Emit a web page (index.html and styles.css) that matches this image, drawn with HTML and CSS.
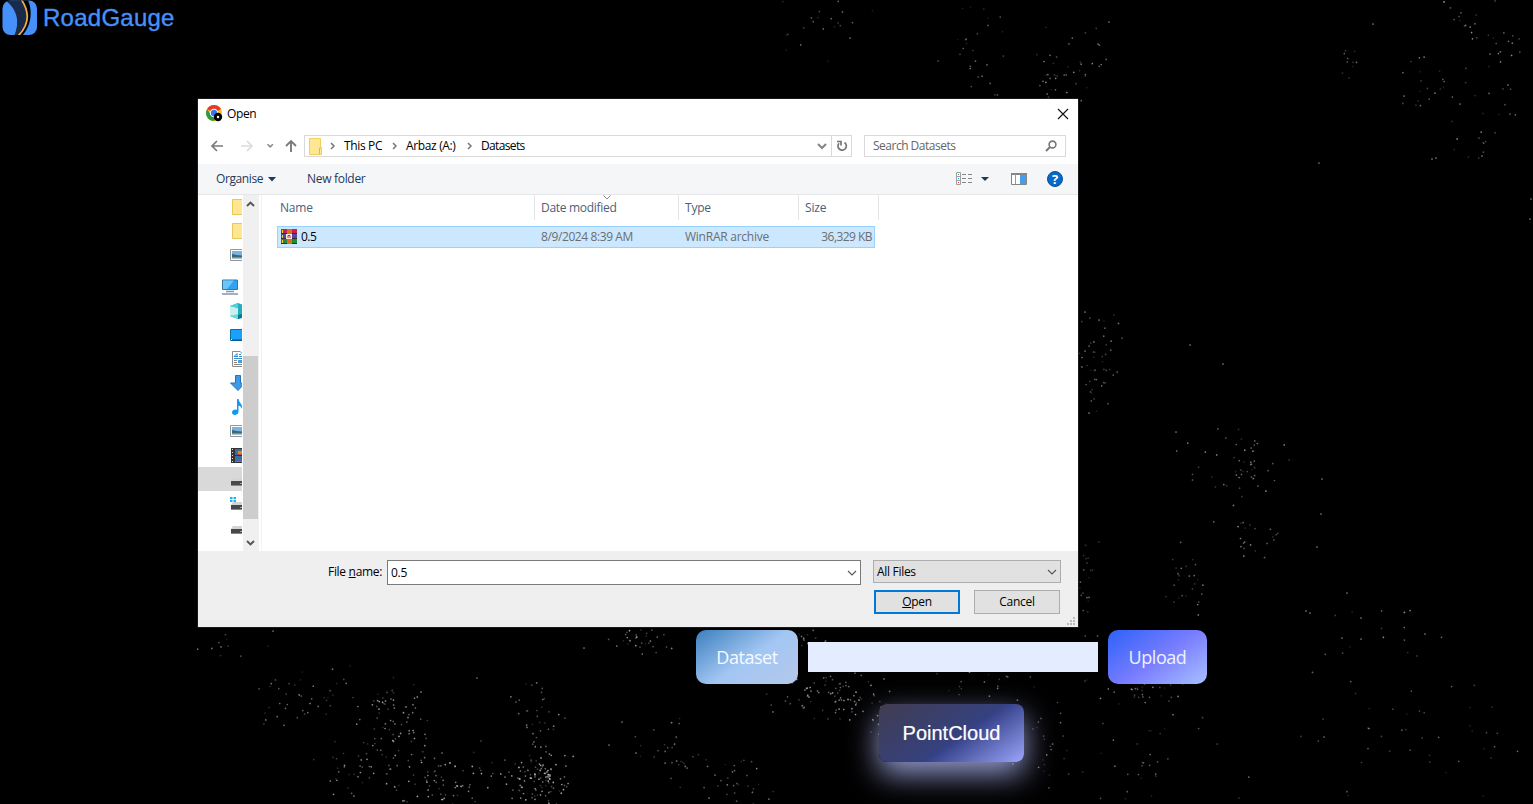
FILE: index.html
```html
<!DOCTYPE html>
<html lang="en">
<head>
<meta charset="utf-8">
<title>RoadGauge</title>
<link rel="stylesheet" href="styles.css">
</head>
<body>
<svg class="stars" id="stars" width="1533" height="804" aria-hidden="true"></svg>
<div class="page">
  <header class="brand">
    <svg width="36" height="36" viewBox="0 0 36 36">
      <defs><clipPath id="badge"><rect x="0.5" y="0.5" width="34.5" height="34.5" rx="8"/></clipPath></defs>
      <g clip-path="url(#badge)">
        <rect width="36" height="36" fill="#4690fa"/>
        <path d="M18 0H26C31 12 29 26 20 36H14Z" fill="#000"/>
        <path d="M3 0C14 8 19 21 12 36H17C29 24 27 8 19 0Z" fill="#1a2b49"/>
        <path d="M19 -1C28 12 27 25 16 36" fill="none" stroke="#f5ac42" stroke-width="1.7"/>
      </g>
    </svg>
    <span class="brand-name">RoadGauge</span>
  </header>
  <main class="controls">
    <div class="upload-row">
      <button class="btn btn-dataset">Dataset</button>
      <div class="path-field"></div>
      <button class="btn btn-upload">Upload</button>
    </div>
    <button class="btn btn-cloud">PointCloud</button>
  </main>
</div>

<section class="dialog">
  <div class="titlebar">
    <svg width="17" height="17" viewBox="0 0 17 17">
      <circle cx="8" cy="8" r="8" fill="#fbc116"/>
      <path d="M8 8L1.1 4A8 8 0 0 1 15 4Z" fill="#e33b2e"/>
      <path d="M1.1 4A8 8 0 0 0 8 16L11 10L5 10Z" fill="#2a9a48"/>
      <circle cx="8" cy="8" r="4.2" fill="#fff"/><circle cx="8" cy="8" r="3.2" fill="#3478e8"/>
      <circle cx="12" cy="12" r="4.2" fill="#000"/><circle cx="12" cy="12" r="1.2" fill="#fff"/>
    </svg>
    <span class="title">Open</span>
    <svg class="close" width="12" height="12" viewBox="0 0 12 12"><path d="M1 1L11 11M11 1L1 11" stroke="#111" stroke-width="1.1"/></svg>
  </div>
  <div class="navbar">
    <div class="arrows">
      <svg width="90" height="22" viewBox="0 0 90 22" fill="none">
        <path d="M13 11H2M7 6L2 11L7 16" stroke="#7a7a7a" stroke-width="1.7"/>
        <path d="M31 11H42M37 6L42 11L37 16" stroke="#dcdcdc" stroke-width="1.7"/>
        <path d="M57.500 9.200L60.200 11.900L62.900 9.200" stroke="#8a8a8a" stroke-width="1.6"/>
        <path d="M81 17V6M76 11L81 6L86 11" stroke="#7a7a7a" stroke-width="1.9"/>
      </svg>
    </div>
    <div class="address">
      <svg class="addr-icon" width="14" height="17" viewBox="0 0 14 17"><path d="M.5 .5H11.500V9.500H12.500V16.500H.5Z" fill="#ffe693" stroke="#f0cf63"/><path d="M10.500 16V10H12" fill="none" stroke="#e3b93f"/></svg>
      <svg class="sep" width="6" height="8" viewBox="0 0 6 8"><path d="M1 1L4 4L1 7" fill="none" stroke="#777" stroke-width="1.5"/></svg>
      <span class="c1">This PC</span>
      <svg class="sep" width="6" height="8" viewBox="0 0 6 8"><path d="M1 1L4 4L1 7" fill="none" stroke="#777" stroke-width="1.5"/></svg>
      <span class="c2">Arbaz (A:)</span>
      <svg class="sep" width="6" height="8" viewBox="0 0 6 8"><path d="M1 1L4 4L1 7" fill="none" stroke="#777" stroke-width="1.5"/></svg>
      <span class="c3">Datasets</span>
      <svg class="addr-drop" width="10" height="7" viewBox="0 0 10 7"><path d="M1 1L5 5L9 1" fill="none" stroke="#858585" stroke-width="2"/></svg>
      <span class="refresh"><svg width="12" height="12" viewBox="0 0 12 12"><path d="M8.500 2.500A4.200 4.200 0 1 1 3 3.200M1 1.500H5V5.500" fill="none" stroke="#757575" stroke-width="1.700"/></svg></span>
    </div>
    <div class="search"><span>Search Datasets</span>
      <svg width="12" height="12" viewBox="0 0 12 12"><circle cx="7.500" cy="4.500" r="3.400" fill="none" stroke="#777" stroke-width="1.600"/><path d="M5 7L1 11" stroke="#777" stroke-width="2"/></svg>
    </div>
  </div>
  <div class="toolbar">
    <span class="organise">Organise</span>
    <svg class="caret" width="8" height="5" viewBox="0 0 8 5"><path d="M0 0H8L4 4.500Z" fill="#1e395b"/></svg>
    <span class="newfolder">New folder</span>
    <svg class="tools" width="108" height="16" viewBox="0 0 108 16">
      <path d="M.5 1.500H4.500V13.500H.5ZM.5 5.500H4.500M.5 9.500H4.500" fill="#fff" stroke="#a0a0a0"/>
      <path d="M2 3H3V4H2Z" fill="#4a9a5b"/><path d="M2 7H3V8H2Z" fill="#2b8be0"/><path d="M2 11H3V12H2Z" fill="#d22"/>
      <path d="M6 3.500H10M12 3.500H16M6 7.500H10M12 7.500H16M6 11.500H10M12 11.500H16" stroke="#858585"/>
      <path d="M25 6H33L29 10Z" fill="#1e395b"/>
      <path d="M55.500 2.500H70.500V13.500H55.500Z" fill="#fff" stroke="#858585"/><path d="M55 3H71" stroke="#858585" stroke-width="2"/><path d="M59.500 3V13" stroke="#999"/><path d="M64 4H70V13H64Z" fill="#459fe8"/>
      <circle cx="99" cy="8" r="7.500" fill="#0668c8" stroke="#07519b"/>
      <text class="help" x="99" y="12.500" text-anchor="middle">?</text>
    </svg>
  </div>
  <div class="browser">
    <div class="tree">
      <div class="node"><svg width="16" height="16"><path d="M2.500 .5H14V15.500H2.500Z" fill="#ffe693" stroke="#e8c75a"/></svg></div>
      <div class="node"><svg width="16" height="16"><path d="M2.500 .5H14V15.500H2.500Z" fill="#ffe693" stroke="#e8c75a"/></svg></div>
      <div class="node"><svg width="16" height="16"><use href="#pic"/></svg></div>
      <div class="node root"><svg width="16" height="16"><path d="M.5 1H15.500V10.500H.5Z" fill="#2fa4f5" stroke="#35789f"/><path d="M1 1.500H12L5 10H1Z" fill="#6cc4fd"/><path d="M4 12.500H12M0 15H16" stroke="#8798a6" stroke-width="1.500"/></svg></div>
      <div class="node"><svg width="16" height="16"><path d="M0 3L8 0L16 3V13L8 16L0 13Z" fill="#22aebd"/><path d="M0 3L8 5V12L0 13Z" fill="#c7f0ef"/><path d="M0 3L8 0V5Z" fill="#55cfd5"/><path d="M0 13L8 11V16Z" fill="#6fd6da"/><path d="M8 12L16 10V14L8 16Z" fill="#08788c"/></svg></div>
      <div class="node"><svg width="16" height="16"><path d="M.5 2.500H16V13.500H.5Z" fill="#1ba1fb" stroke="#0b6cad"/><path d="M1 13H12" stroke="#064f82"/><path d="M1 12H2V13H1Z" fill="#fff"/></svg></div>
      <div class="node"><svg width="16" height="16"><path d="M2.500 .5H10L14 4V15.500H2.500Z" fill="#fff" stroke="#8b8b8b"/><path d="M4 5.500L7 2.500V6M4 5.500H8M9 3.500H11M9 5.500H13M4 7.500H13" fill="none" stroke="#2991d2"/><path d="M8 9H13V12H8Z" fill="#4d9bd0"/><path d="M4 9.500H7M4 11.500H7M4 13.500H13" stroke="#888"/></svg></div>
      <div class="node"><svg width="16" height="16"><path d="M5.500 .5H10.500V8H15L8 15.500L.5 8H5.500Z" fill="#3b99e8" stroke="#2473b8"/></svg></div>
      <div class="node"><svg width="16" height="16"><path d="M7 0H8.500C9 4 13 5 12 10C11 7.500 10 7 8.500 6.500V13C8 16.500 2 17 2 13.500C2 11 5 10 7 11Z" fill="#1299f2"/></svg></div>
      <div class="node"><svg width="16" height="16"><use href="#pic"/></svg></div>
      <div class="node"><svg width="16" height="16"><path d="M1 1H15V16H1Z" fill="#343434"/><path d="M2.500 2V16" stroke="#ddd" stroke-dasharray="1 2"/><path d="M5 2H13V8H5ZM5 9H13V15H5Z" fill="#3a6ca8"/><path d="M8 4H12V7H8Z" fill="#d28d24"/><path d="M7 7H12V8H7ZM8 12H12V13H8Z" fill="#c74032"/><path d="M5 14H12V15H5Z" fill="#4f963d"/></svg></div>
      <div class="node selected"><svg width="16" height="16"><use href="#drive"/></svg></div>
      <div class="node"><svg width="16" height="16"><use href="#drive"/><path d="M0 2H2.500V4H0ZM3.500 2H6V4H3.500ZM0 5H2.500V7H0ZM3.500 5H6V7H3.500Z" fill="#16b5ef"/></svg></div>
      <div class="node"><svg width="16" height="16"><use href="#drive"/></svg></div>
    </div>
    <div class="scroll">
      <svg width="15" height="18" viewBox="0 0 15 18"><path d="M4 11L7.500 7.500L11 11" fill="none" stroke="#555" stroke-width="1.900"/></svg>
      <div class="thumb"></div>
      <svg width="15" height="18" viewBox="0 0 15 18"><path d="M4 8L7.500 11.500L11 8" fill="none" stroke="#555" stroke-width="1.900"/></svg>
    </div>
    <div class="files">
      <div class="cols head">
        <span>Name</span><span><svg class="sort" width="8" height="5" viewBox="0 0 8 5"><path d="M.5 .5L4 4L7.500 .5" fill="none" stroke="#8b8b8b"/></svg><b class="h-date">Date modified</b></span><span>Type</span><span>Size</span>
      </div>
      <div class="cols file">
        <span><svg width="16" height="16"><path d="M0 0H16V5H0Z" fill="#c42353"/><path d="M0 5H16V10H0Z" fill="#514d9c"/><path d="M0 10H16V15H0Z" fill="#22893b"/><path d="M0 4.500H16M0 9.500H16M0 14.500H16" stroke="#382935"/><path d="M6 0H11V15H6Z" fill="#e26b21"/><path d="M5 5H11V10H5Z" fill="#f3e7e0"/><path d="M7 9V6.500H9V9" fill="none" stroke="#c03030"/><path d="M1.500 1V4M1.500 6V9M1.500 11V14" stroke="#f1cc36"/></svg>0.5</span>
        <span class="f-date">8/9/2024 8:39 AM</span><span class="f-type">WinRAR archive</span><span class="f-size">36,329 KB</span>
      </div>
    </div>
  </div>
  <div class="footer">
    <div class="frow">
      <label class="fl">File <u>n</u>ame:</label>
      <div class="fname"><span>0.5</span><svg width="10" height="6" viewBox="0 0 10 6"><path d="M1 1L5 5L9 1" fill="none" stroke="#555" stroke-width="1.100"/></svg></div>
      <div class="ftype"><span>All Files</span><svg width="10" height="6" viewBox="0 0 10 6"><path d="M1 1L5 5L9 1" fill="none" stroke="#555" stroke-width="1.100"/></svg></div>
    </div>
    <div class="actions"><div class="act primary"><span><u>O</u>pen</span></div><div class="act"><span>Cancel</span></div></div>
    <svg class="grip" width="8" height="8"><path d="M6 0H8V2H6ZM3 3H5V5H3ZM6 3H8V5H6ZM0 6H2V8H0ZM3 6H5V8H3ZM6 6H8V8H6Z" fill="#bbb"/></svg>
  </div>
</section>

<svg class="defs" width="0" height="0">
  <defs>
    <g id="pic"><path d="M.5 2.500H16V13.500H.5Z" fill="#fff" stroke="#969696"/><path d="M2 4H16V12H2Z" fill="#78b4e4"/><path d="M2 7L7 8L16 9V11H2Z" fill="#3d6870"/><path d="M2 10.500H16V12H2Z" fill="#a7c3dc"/></g>
    <g id="drive"><path d="M3 7H16V10H1Z" fill="#d4d4d4"/><path d="M1 10H16V15H1Z" fill="#484848"/><path d="M1 14.500H16" stroke="#888"/><path d="M10 12H12V13H10Z" fill="#4ce05d"/></g>
  </defs>
</svg>
<script src="stars.js"></script>
</body>
</html>
```

FILE: styles.css
```css
* { box-sizing: border-box; }
body {
  margin: 0;
  width: 1533px;
  height: 804px;
  overflow: hidden;
  background: #000;
  font-family: "Open Sans", "Noto Sans", sans-serif;
}
svg { display: block; flex: none; }
.stars { position: absolute; left: 0; top: 0; }
.defs { position: absolute; }

.page {
  position: relative;
  height: 804px;
  display: flex;
  flex-direction: column;
  justify-content: space-between;
}
.brand { display: flex; align-items: center; padding-left: 2px; height: 36px; gap: 5px; }
.brand-name { font: 24px/36px "Liberation Sans", Arial, sans-serif; color: #4690fa; letter-spacing: 0.25px; -webkit-text-stroke: 0.4px #4690fa; }

.controls {
  padding: 0 0 42px 370px;
  display: flex;
  flex-direction: column;
  align-items: center;
  gap: 20px;
}
.upload-row { display: flex; align-items: center; gap: 10px; }
.btn { border: 0; border-radius: 10px; padding: 0; color: #fff; height: 54px; font: 500 18px "Open Sans", sans-serif; letter-spacing: -0.45px; }
.btn-dataset { width: 102px; background: linear-gradient(145deg, #3c7fbe 0%, #a2c6f3 52%, #b5c8eb 100%); color: #f5faff; }
.btn-upload { width: 99px; background: linear-gradient(145deg, #2d61f8 0%, #797dff 52%, #a8c0ff 100%); color: #eef2ff; }
.path-field { width: 290px; height: 30px; background: #e3edff; }
.btn-cloud {
  width: 145px;
  height: 58px;
  border-radius: 8px;
  font: 20px "Liberation Sans", Arial, sans-serif;
  letter-spacing: 0;
  -webkit-text-stroke: 0.2px #fff;
  background: linear-gradient(145deg, #413c50 0%, #35417f 55%, #36438a 57%, #9ca5fb 100%);
  box-shadow: 0 12px 30px 0 rgba(175, 182, 245, 0.85);
}

.dialog {
  position: absolute;
  left: 198px;
  top: 99px;
  width: 880px;
  height: 528px;
  background: #fff;
  font-size: 12px;
  line-height: 16px;
  color: #000;
  display: flex;
  flex-direction: column;
  outline: 1px solid #19191b;
}
.dialog span, .dialog label { white-space: nowrap; }
.titlebar { display: flex; align-items: center; height: 29px; padding: 0 9px 0 8px; }
.title { margin-left: 4px; flex: 1; letter-spacing: -0.4px; padding-top: 1px; }
.navbar { display: flex; height: 36px; padding-top: 7px; padding-left: 12px; }
.navbar .arrows { width: 94px; }
.address { width: 548px; height: 22px; border: 1px solid #d9d9d9; display: flex; align-items: center; padding-left: 4px; }
.addr-icon { margin-right: 7px; }
.sep { margin-right: 8px; }
.c1, .c2 { letter-spacing: -0.35px; }
.c3 { letter-spacing: -0.65px; flex: 1; }
.c1 { width: 48px; }
.c2 { width: 61px; }
.addr-drop { margin-right: 4px; }
.refresh { border-left: 1px solid #d9d9d9; width: 20px; height: 20px; display: flex; align-items: center; justify-content: center; }
.search { width: 202px; height: 22px; margin-left: 12px; border: 1px solid #d9d9d9; display: flex; align-items: center; justify-content: space-between; padding: 0 8px 0 8px; color: #666; letter-spacing: -0.5px; }
.toolbar { height: 31px; background: #f5f6f8; border-bottom: 1px solid #e4e6e9; display: flex; align-items: center; padding: 0 14px 0 18px; color: #1e395b; }
.organise { width: 52px; letter-spacing: -0.4px; }
.newfolder { margin-left: 31px; flex: 1; letter-spacing: -0.3px; }
.help { font: bold 13px "Open Sans", sans-serif; fill: #fff; }

.browser { height: 356px; display: flex; }
.tree { width: 44px; overflow: hidden; margin-right: 1px; }
.node { height: 24px; padding: 4px 0 0 32px; }
.node.root { margin-top: 8px; padding-left: 24px; }
.node.selected { background: #d9d9d9; }
.scroll { width: 16px; background: #f0f0f0; display: flex; flex-direction: column; }
.thumb { margin-top: 143px; margin-bottom: 14px; width: 15px; height: 163px; background: #cdcdcd; }
.files { margin-left: 2px; border-left: 1px solid #f2f2f2; flex: 1; padding-left: 15px; }
.cols { display: grid; grid-template-columns: 258px 144px 120px 80px; }
.head { height: 26px; color: #4c607a; width: 602px; }
.head span { position: relative; border-right: 1px solid #e5e5e5; padding: 5px 0 0 6px; height: 25px; letter-spacing: -0.2px; }
.head span:first-child { padding-left: 3px; }
.head .h-date { font-weight: 400; letter-spacing: -0.3px; }
.sort { position: absolute; left: 68px; top: 0; }
.file { grid-template-columns: 257px 144px 120px 73px; width: 598px; height: 22px; margin-top: 5px; background: #cce8ff; border: 1px solid #99d1ff; color: #6b6d70; align-items: center; }
.file span { padding-left: 6px; }
.file span:first-child { display: flex; align-items: center; gap: 4px; padding-left: 3px; color: #000; letter-spacing: -0.5px; }
.file .f-size { text-align: right; padding: 0; letter-spacing: -0.55px; }
.f-date { letter-spacing: -0.4px; }
.f-type { letter-spacing: -0.25px; }

.footer { height: 76px; background: #efefef; position: relative; padding-top: 8px; display: flex; flex-direction: column; gap: 6px; letter-spacing: -0.3px; }
.frow { display: flex; height: 25px; padding-left: 130px; }
.fl { width: 59px; padding-top: 5px; }
.fname { width: 474px; height: 25px; margin-top: 1px; border: 1px solid #7a7a7a; background: #fff; display: flex; align-items: center; justify-content: space-between; padding: 0 3px; }
.ftype { width: 188px; height: 23px; margin: 1px 0 0 12px; border: 1px solid #adadad; background: #e1e1e1; display: flex; align-items: center; justify-content: space-between; padding: 0 3px; }
.actions { display: flex; gap: 14px; padding-left: 676px; }
.act { width: 86px; height: 24px; background: #e1e1e1; border: 1px solid #adadad; display: flex; align-items: center; justify-content: center; }
.act.primary { border: 2px solid #0078d7; }
.grip { position: absolute; right: 3px; bottom: 2px; }
```

FILE: stars.js
```js
// Seeded generator keeps the star field stable between loads.
let seed = 7;
function rnd() {
  seed = (seed * 16807) % 2147483647;
  return seed / 2147483647;
}
// Clusters: centre x, centre y, spread x, spread y, count, peak opacity.
const clusters = [
  [300, 695, 38, 24, 45, 0.4], [396, 713, 24, 22, 65, 0.55], [362, 765, 30, 20, 45, 0.5],
  [440, 782, 45, 28, 100, 0.55], [538, 716, 20, 26, 35, 0.5], [540, 780, 22, 20, 110, 0.6],
  [643, 637, 22, 12, 35, 0.55], [670, 755, 25, 25, 25, 0.45], [726, 780, 32, 20, 35, 0.45],
  [822, 690, 40, 24, 75, 0.55], [868, 710, 28, 20, 38, 0.5], [810, 640, 18, 14, 22, 0.4],
  [975, 680, 40, 18, 24, 0.4], [1145, 690, 30, 12, 40, 0.45], [1095, 365, 20, 36, 50, 0.4],
  [1235, 470, 36, 36, 55, 0.45], [1258, 540, 20, 15, 20, 0.5], [1185, 585, 20, 40, 26, 0.4],
  [1085, 590, 12, 60, 30, 0.35], [1070, 72, 26, 36, 42, 0.45], [975, 50, 26, 50, 30, 0.4],
  [840, 22, 55, 30, 26, 0.35], [1352, 58, 10, 25, 10, 0.4], [1465, 20, 14, 16, 12, 0.5],
  [1430, 90, 40, 34, 25, 0.4], [1500, 70, 30, 65, 28, 0.45], [1478, 145, 16, 14, 10, 0.5],
  [1040, 730, 30, 40, 26, 0.4], [1150, 755, 60, 45, 35, 0.4], [1390, 625, 60, 35, 15, 0.5],
  [1420, 740, 100, 55, 45, 0.4], [230, 648, 26, 9, 9, 0.4]
];
// Single bright stars: x, y.
const single = [
  [1347, 593], [1361, 618], [1361, 639], [1425, 634], [1342, 638], [1306, 611], [1310, 613],
  [1223, 364], [1190, 345], [1322, 479], [1321, 514], [1317, 547], [1373, 24], [1319, 163],
  [1531, 199], [1530, 219], [1432, 159], [1436, 158], [1482, 156], [1404, 96], [1460, 104],
  [1085, 312], [1099, 320], [1089, 413], [1176, 432], [850, 38], [1109, 22], [1098, 44],
  [609, 745], [505, 777], [584, 648], [622, 722], [636, 753], [273, 631], [477, 678]
];
let out = '';
function dot(x, y, a) {
  out += `<circle cx="${x.toFixed(1)}" cy="${y.toFixed(1)}" r="0.85" fill="#fff" fill-opacity="${a.toFixed(2)}"/>`;
}
for (const [cx, cy, sx, sy, n, peak] of clusters) {
  for (let i = 0; i < n; i++) {
    const x = cx + (rnd() + rnd() + rnd() - 1.5) * sx * 1.25;
    const y = cy + (rnd() + rnd() + rnd() - 1.5) * sy * 1.25;
    dot(x, y, peak * (0.25 + 0.95 * rnd()));
  }
}
for (const [x, y] of single) dot(x, y, 0.5);
document.getElementById('stars').innerHTML = out;
```
